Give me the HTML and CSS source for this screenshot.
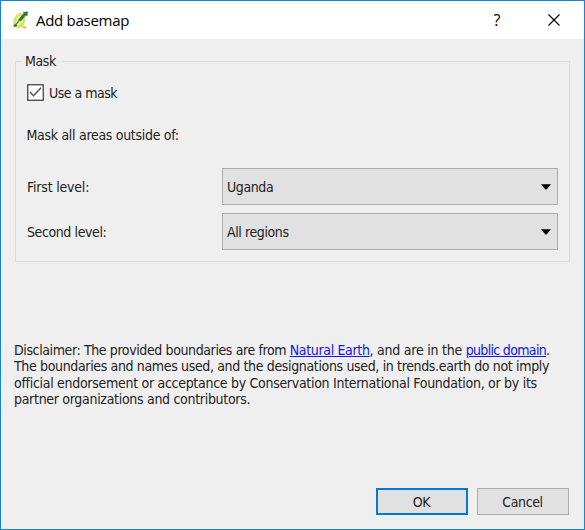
FILE: index.html
```
<!DOCTYPE html>
<html lang="en">
<head>
<meta charset="utf-8">
<title>Add basemap</title>
<link rel="stylesheet" href="styles.css">
</head>
<body>
<div class="window">
  <header class="titlebar">
    <svg class="logo" viewBox="0 0 18 20" width="18" height="20">
      <ellipse cx="7.300" cy="10.500" rx="4.300" ry="6.300" transform="rotate(18 7 10.5)" fill="#f7f8b0" stroke="#dbe46a" stroke-width="3"/>
      <path d="M8.500 14.500l4 3.300 2-.6" fill="none" stroke="#d5df55" stroke-width="2.400"/>
      <path d="M3 15.500L11 6" stroke="#4f9445" stroke-width="1.500"/>
      <path d="M7.500 10.500L13 4" stroke="#287d2d" stroke-width="3"/>
      <path d="M10.500 2.500L15.800 1.200 15.500 6.500z" fill="#287d2d"/>
      <path d="M1 15.500l3-1.500 1.300 1.500-2.500 1.800z" fill="#287d2d"/>
    </svg>
    <h1 class="title">Add basemap</h1>
    <span class="help">?</span>
    <svg class="close" viewBox="0 0 12 12" width="12" height="12"><path d="M.5.5l11 11M11.500.5l-11 11" stroke="#000" stroke-width="1.1"/></svg>
  </header>
  <main class="content">
    <fieldset class="group">
      <legend class="legend">Mask</legend>
      <label class="check"><svg class="box" viewBox="0 0 17 17" width="17" height="17"><rect x=".75" y=".75" width="15.500" height="15.500" fill="#fff" stroke="#444" stroke-width="1.3"/><path d="M3 8l3.500 3.700 7.500-8" fill="none" stroke="#555" stroke-width="1.500"/></svg><span class="check-text">Use a mask</span></label>
      <p class="hint">Mask all areas outside of:</p>
      <div class="row"><span class="label first">First level:</span><div class="combo"><span>Uganda</span><svg class="arrow" viewBox="0 0 10 6" width="10" height="6"><path d="M0 .3h10L5.500 5.500h-1z"/></svg></div></div>
      <div class="row"><span class="label">Second level:</span><div class="combo"><span>All regions</span><svg class="arrow" viewBox="0 0 10 6" width="10" height="6"><path d="M0 .3h10L5.500 5.500h-1z"/></svg></div></div>
    </fieldset>
    <p class="disclaimer"><span class="line l1">Disclaimer: The provided boundaries are from <a class="earth" href="#">Natural Earth</a><span class="joiner">, and are in the </span><a class="domain" href="#">public domain</a>.</span><span class="line l2">The boundaries and names used, and the designations used, in trends.earth do not imply</span><span class="line l3">official endorsement or acceptance by Conservation International Foundation, or by its</span><span class="line l4">partner organizations and contributors.</span></p>
    <footer class="actions"><button class="btn primary">OK</button><button class="btn">Cancel</button></footer>
  </main>
</div>
</body>
</html>
```
FILE: styles.css
```
* { box-sizing: border-box; }
body { margin: 0; font: 14px/16px "DejaVu Sans Condensed", "DejaVu Sans", sans-serif; font-stretch: condensed; letter-spacing: -0.4px; color: #222; }
h1, p { margin: 0; }
.window { width: 585px; height: 530px; border: 1px solid #1883d7; background: #efefef; display: flex; flex-direction: column; }
.titlebar { height: 38px; background: #fff; display: flex; align-items: center; padding: 0 24px 0 11px; color: #000; }
.logo { flex: none; }
.title { margin-left: 6px; font: 15px/20px "Open Sans", sans-serif; letter-spacing: -0.28px; flex: 1; }
.help { font: 16px/20px "Open Sans", sans-serif; margin-right: 48px; }
.content { flex: 1; padding: 14px 14px 0 14px; display: flex; flex-direction: column; }
.group { margin: 0; padding: 0 11px; height: 209px; border: 1px solid #dcdcdc; }
.legend { margin-left: -5px; padding: 0 6px 0 3px; height: 16px; }
.check { display: flex; align-items: center; height: 17px; margin-top: 15px; }
.check-text { margin-left: 5px; letter-spacing: -0.5px; }
.hint { margin: 26px 0 25px -0.5px; letter-spacing: -0.3px; }
.row { display: flex; align-items: center; height: 37px; margin-bottom: 8px; }
.label { width: 195px; }
.first { letter-spacing: -0.2px; }
.combo { flex: 1; height: 37px; border: 1px solid #adadad; background: #e1e1e1; display: flex; align-items: center; justify-content: space-between; padding: 0 6px 0 4px; }
.disclaimer { margin: 80px 0 0 -1px; }
.line { display: block; white-space: nowrap; height: 16.3px; }
.l1 { letter-spacing: -0.39px; }
.earth { letter-spacing: -0.34px; }
.joiner { letter-spacing: -0.24px; }
.domain { letter-spacing: -0.67px; }
.l2 { letter-spacing: -0.35px; }
.l3 { letter-spacing: -0.29px; }
.l4 { letter-spacing: -0.3px; }
a { color: #1414f5; text-decoration: underline; }
.actions { display: flex; justify-content: flex-end; gap: 9px; margin: auto 1px 14px 0; }
.btn { width: 92px; height: 27px; padding: 0 1px 0 0; border: 1px solid #adadad; background: #e1e1e1; font: inherit; letter-spacing: inherit; color: inherit; }
.primary { border: 2px solid #0078d7; }
```
